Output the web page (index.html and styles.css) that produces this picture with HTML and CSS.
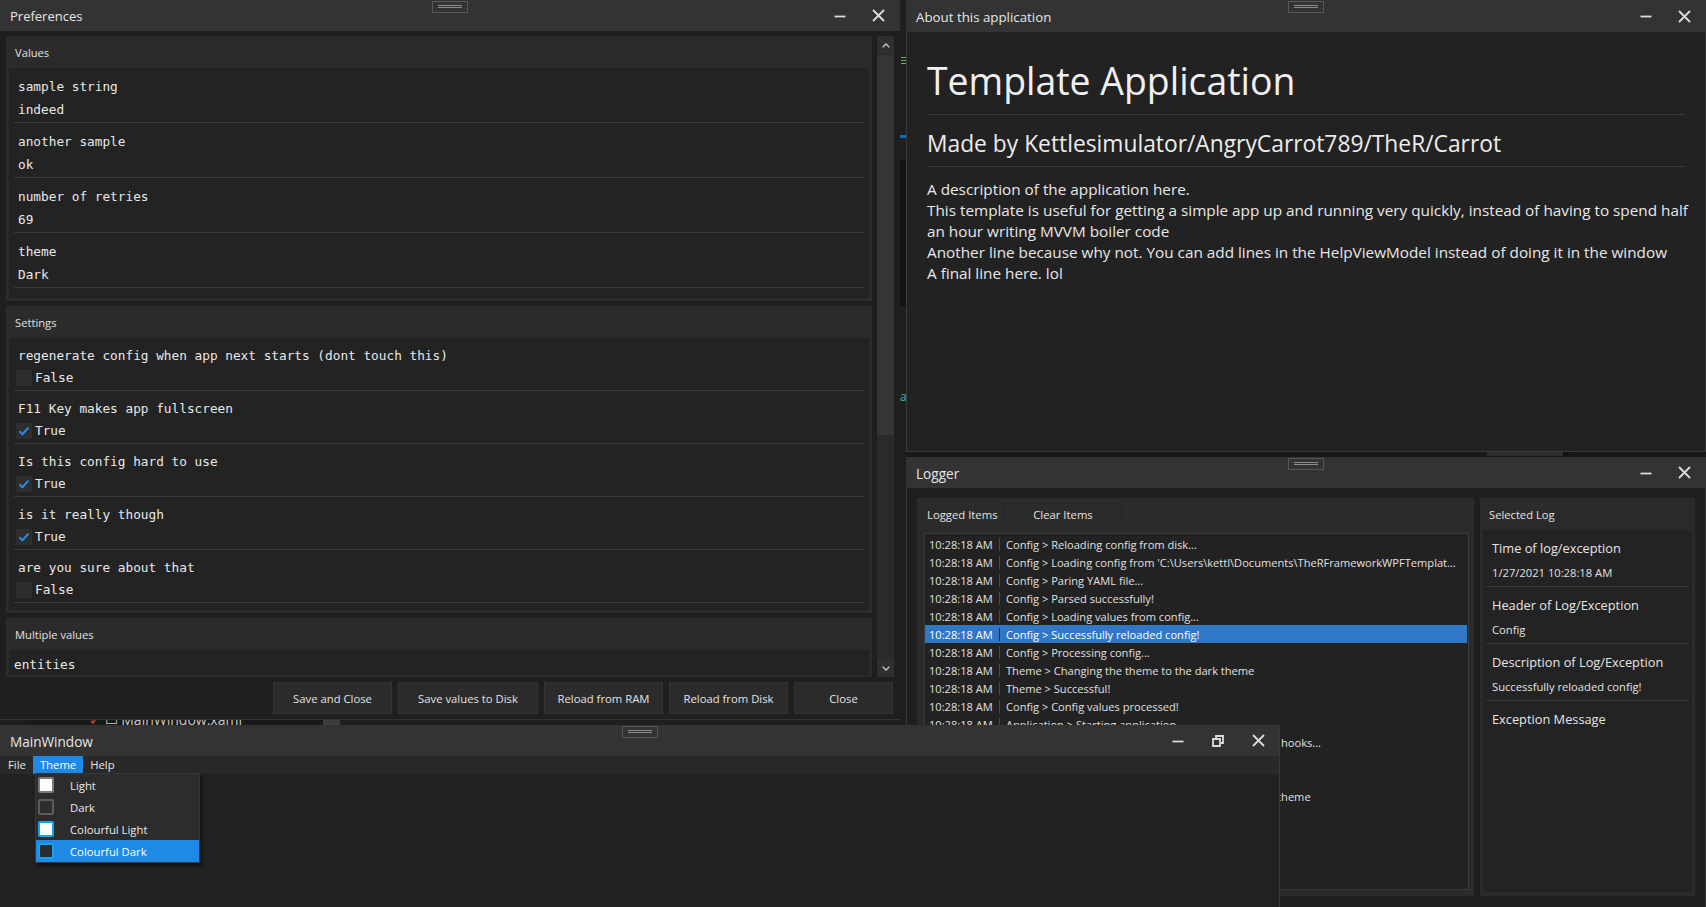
FILE: index.html
```html
<!DOCTYPE html>
<html lang="en">
<head>
<meta charset="utf-8">
<title>Template Application</title>
<link rel="stylesheet" href="styles.css">
</head>
<body>
<div class="desktop">

  <!-- the IDE that shows between the windows -->
  <div class="vs-gap">
    <span class="vs-lines"></span>
    <span class="vs-blue"></span>
    <span class="vs-dark"></span>
    <span class="vs-teal">a</span>
  </div>
  <div class="vs-strip">
    <div class="vs-tree"><span class="vs-file"><span class="vs-red">✓</span> ▭ MainWindow.xaml</span></div>
    <span class="vs-thumb"></span>
  </div>
  <div class="vs-between"><span class="vs-bar"></span></div>

  <!-- Preferences -->
  <section class="window prefs">
    <header class="titlebar">
      <span class="title">Preferences</span>
      <div class="controls">
        <span class="ctl"><svg class="ico" width="12" height="12" viewBox="0 0 12 12"><path d="M0.5 6.5H11.5"/></svg></span>
        <span class="ctl"><svg class="ico" width="13" height="13" viewBox="0 0 13 13"><path d="M1 1L12 12M12 1L1 12"/></svg></span>
      </div>
    </header>
    <span class="grip"></span>
    <div class="prefs-body">
      <div class="scroll-area">
        <div class="groups">
          <div class="group">
            <div class="group-header">Values</div>
            <div class="group-list values">
              <div class="item"><div class="item-label">sample string</div><div class="item-value">indeed</div></div>
              <div class="item"><div class="item-label">another sample</div><div class="item-value">ok</div></div>
              <div class="item"><div class="item-label">number of retries</div><div class="item-value">69</div></div>
              <div class="item"><div class="item-label">theme</div><div class="item-value">Dark</div></div>
            </div>
          </div>
          <div class="group">
            <div class="group-header">Settings</div>
            <div class="group-list settings">
              <div class="item"><div class="item-label">regenerate config when app next starts (dont touch this)</div><div class="check-row"><span class="checkbox"></span><span>False</span></div></div>
              <div class="item"><div class="item-label">F11 Key makes app fullscreen</div><div class="check-row"><span class="checkbox"><svg width="16" height="16" viewBox="0 0 16 16"><path d="M3.5 8.2L6.4 11.2L12.5 4.6"/></svg></span><span>True</span></div></div>
              <div class="item"><div class="item-label">Is this config hard to use</div><div class="check-row"><span class="checkbox"><svg width="16" height="16" viewBox="0 0 16 16"><path d="M3.5 8.2L6.4 11.2L12.5 4.6"/></svg></span><span>True</span></div></div>
              <div class="item"><div class="item-label">is it really though</div><div class="check-row"><span class="checkbox"><svg width="16" height="16" viewBox="0 0 16 16"><path d="M3.5 8.2L6.4 11.2L12.5 4.6"/></svg></span><span>True</span></div></div>
              <div class="item"><div class="item-label">are you sure about that</div><div class="check-row"><span class="checkbox"></span><span>False</span></div></div>
            </div>
          </div>
          <div class="group">
            <div class="group-header">Multiple values</div>
            <div class="group-list flat">
              <div class="item plain"><div class="item-label">entities</div></div>
            </div>
          </div>
        </div>
        <div class="scrollbar">
          <span class="sb-btn"><svg width="8" height="5" viewBox="0 0 8 5"><path d="M0.6 4.4L4 1L7.4 4.4"/></svg></span>
          <span class="sb-thumb"></span>
          <span class="sb-track"></span>
          <span class="sb-btn"><svg width="8" height="5" viewBox="0 0 8 5"><path d="M0.6 0.6L4 4L7.4 0.6"/></svg></span>
        </div>
      </div>
      <div class="btn-row">
        <button class="btn w119">Save and Close</button>
        <button class="btn w140">Save values to Disk</button>
        <button class="btn w119">Reload from RAM</button>
        <button class="btn w119">Reload from Disk</button>
        <button class="btn w99">Close</button>
      </div>
    </div>
  </section>

  <!-- About -->
  <section class="window about">
    <header class="titlebar tall">
      <span class="title mid">About this application</span>
      <div class="controls">
        <span class="ctl"><svg class="ico" width="12" height="12" viewBox="0 0 12 12"><path d="M0.5 6.5H11.5"/></svg></span>
        <span class="ctl"><svg class="ico" width="13" height="13" viewBox="0 0 13 13"><path d="M1 1L12 12M12 1L1 12"/></svg></span>
      </div>
    </header>
    <span class="grip"></span>
    <div class="about-body">
      <h1 class="app-name">Template Application</h1>
      <h2 class="app-author">Made by Kettlesimulator/AngryCarrot789/TheR/Carrot</h2>
      <div class="app-desc">
        <p>A description of the application here.</p>
        <p>This template is useful for getting a simple app up and running very quickly, instead of having to spend half an hour writing MVVM boiler code</p>
        <p>Another line because why not. You can add lines in the HelpViewModel instead of doing it in the window</p>
        <p>A final line here. lol</p>
      </div>
    </div>
  </section>

  <!-- Logger -->
  <section class="window logger">
    <header class="titlebar">
      <span class="title big">Logger</span>
      <div class="controls">
        <span class="ctl"><svg class="ico" width="12" height="12" viewBox="0 0 12 12"><path d="M0.5 6.5H11.5"/></svg></span>
        <span class="ctl"><svg class="ico" width="13" height="13" viewBox="0 0 13 13"><path d="M1 1L12 12M12 1L1 12"/></svg></span>
      </div>
    </header>
    <span class="grip"></span>
    <div class="logger-body">
      <div class="log-panel">
        <div class="log-header">
          <span class="log-caption">Logged Items</span>
          <button class="clear-btn">Clear Items</button>
        </div>
        <div class="log-list">
          <div class="row"><span class="time">10:28:18 AM</span><span class="sep"></span><span class="msg">Config &gt; Reloading config from disk...</span></div>
          <div class="row"><span class="time">10:28:18 AM</span><span class="sep"></span><span class="msg">Config &gt; Loading config from 'C:\Users\kettl\Documents\TheRFrameworkWPFTemplate\TheRFrameworkWPFTemplate\bin\Debug\config.yml'</span></div>
          <div class="row"><span class="time">10:28:18 AM</span><span class="sep"></span><span class="msg">Config &gt; Paring YAML file...</span></div>
          <div class="row"><span class="time">10:28:18 AM</span><span class="sep"></span><span class="msg">Config &gt; Parsed successfully!</span></div>
          <div class="row"><span class="time">10:28:18 AM</span><span class="sep"></span><span class="msg">Config &gt; Loading values from config...</span></div>
          <div class="row selected"><span class="time">10:28:18 AM</span><span class="sep"></span><span class="msg">Config &gt; Successfully reloaded config!</span></div>
          <div class="row"><span class="time">10:28:18 AM</span><span class="sep"></span><span class="msg">Config &gt; Processing config...</span></div>
          <div class="row"><span class="time">10:28:18 AM</span><span class="sep"></span><span class="msg">Theme &gt; Changing the theme to the dark theme</span></div>
          <div class="row"><span class="time">10:28:18 AM</span><span class="sep"></span><span class="msg">Theme &gt; Successful!</span></div>
          <div class="row"><span class="time">10:28:18 AM</span><span class="sep"></span><span class="msg">Config &gt; Config values processed!</span></div>
          <div class="row"><span class="time">10:28:18 AM</span><span class="sep"></span><span class="msg">Application &gt; Starting application...</span></div>
          <div class="row"><span class="time">10:28:18 AM</span><span class="sep"></span><span class="msg">Application &gt; Setting up Global Unhandled exception hooks...</span></div>
          <div class="row"><span class="time">10:28:18 AM</span><span class="sep"></span><span class="msg">Application &gt; Hooks set up!</span></div>
          <div class="row"><span class="time">10:28:18 AM</span><span class="sep"></span><span class="msg">Theme &gt; Loading theme...</span></div>
          <div class="row"><span class="time">10:28:18 AM</span><span class="sep"></span><span class="msg">Theme &gt; Changing the Theme to The Colourful Dark theme</span></div>
          <div class="row"><span class="time">10:28:18 AM</span><span class="sep"></span><span class="msg">Theme &gt; Successful!</span></div>
        </div>
      </div>
      <div class="sel-panel">
        <div class="sel-header">Selected Log</div>
        <div class="sel-list">
          <div class="sel-item"><div class="sel-title">Time of log/exception</div><div class="sel-value">1/27/2021 10:28:18 AM</div></div>
          <div class="sel-item"><div class="sel-title">Header of Log/Exception</div><div class="sel-value">Config</div></div>
          <div class="sel-item"><div class="sel-title">Description of Log/Exception</div><div class="sel-value">Successfully reloaded config!</div></div>
          <div class="sel-item last"><div class="sel-title">Exception Message</div></div>
        </div>
      </div>
    </div>
  </section>

  <!-- MainWindow -->
  <section class="window main">
    <header class="titlebar">
      <span class="title big">MainWindow</span>
      <div class="controls wide">
        <span class="ctl"><svg class="ico" width="12" height="12" viewBox="0 0 12 12"><path d="M0.5 6.5H11.5"/></svg></span>
        <span class="ctl"><svg class="ico" width="12" height="12" viewBox="0 0 12 12"><path d="M4 3V1H11V8H9M1 4H8V11H1Z"/></svg></span>
        <span class="ctl"><svg class="ico" width="13" height="13" viewBox="0 0 13 13"><path d="M1 1L12 12M12 1L1 12"/></svg></span>
      </div>
    </header>
    <span class="grip"></span>
    <nav class="menubar">
      <span class="menu-item">File</span>
      <span class="menu-item open">Theme</span>
      <span class="menu-item">Help</span>
    </nav>
    <div class="main-body"></div>
    <div class="dropdown">
      <div class="dd-item"><span class="swatch light"></span><span>Light</span></div>
      <div class="dd-item"><span class="swatch dark"></span><span>Dark</span></div>
      <div class="dd-item"><span class="swatch clight"></span><span>Colourful Light</span></div>
      <div class="dd-item active"><span class="swatch cdark"></span><span>Colourful Dark</span></div>
    </div>
  </section>

</div>
</body>
</html>
```

FILE: styles.css
```css
* { box-sizing: border-box; margin: 0; padding: 0; }

html, body { width: 1706px; height: 907px; overflow: hidden; }

body {
  background: #1c1c1c;
  font-family: "Open Sans", "Noto Sans", sans-serif;
  font-size: 11.2px;
  color: #e2e2e2;
}

.desktop {
  position: relative;
  width: 1706px;
  height: 907px;
  overflow: hidden;
  background: #1c1c1c;
}

/* ---------- IDE peeking through ---------- */
.vs-gap {
  position: absolute;
  left: 900px; top: 0;
  width: 6px; height: 907px;
  background: #1f1f1f;
  overflow: hidden;
}
.vs-gap span { position: absolute; display: block; }
.vs-lines {
  left: 1px; top: 57px; width: 5px; height: 9px;
  background: repeating-linear-gradient(#68b468 0 1px, transparent 1px 3px);
}
.vs-blue { left: 0; top: 135px; width: 6px; height: 3px; background: #0d6fbf; }
.vs-dark { left: 0; top: 160px; width: 6px; height: 146px; background: #141414; }
.vs-teal { left: 0; top: 389px; font-size: 12px; line-height: 16px; color: #3fb5a5; }

.vs-strip {
  position: absolute;
  left: 0; top: 719px;
  width: 900px; height: 6px;
  background: #1e1e1e;
  overflow: hidden;
}
.vs-tree {
  position: absolute;
  left: 25px; top: 0;
  width: 298px; height: 6px;
  background: #191919;
  overflow: hidden;
}
.vs-file {
  position: absolute;
  left: 64px; top: -9px;
  font-size: 14px; line-height: 19px;
  color: #c8c8c8;
  white-space: nowrap;
}
.vs-red { color: #d24b4b; }
.vs-thumb {
  position: absolute;
  left: 323px; top: 0;
  width: 17px; height: 6px;
  background: #3d3d3d;
}

.vs-between {
  position: absolute;
  left: 906px; top: 452px;
  width: 800px; height: 5px;
  background: #191919;
}
.vs-bar {
  position: absolute;
  left: 581px; top: 0;
  width: 82px; height: 4px;
  background: #2c2c2c;
  border-right: 6px solid #111;
}

/* ---------- windows ---------- */
.window {
  position: absolute;
  display: flex;
  flex-direction: column;
  background: #222;
}
.prefs  { left: 0;     top: 0;     width: 900px;  height: 720px; }
.about  { left: 906px; top: 0;     width: 800px;  height: 452px; }
.logger { left: 906px; top: 457px; width: 800px;  height: 452px; }
.main   { left: 0;     top: 725px; width: 1280px; height: 184px; }

.titlebar {
  flex: none;
  height: 31px;
  display: flex;
  align-items: center;
  padding-left: 10px;
  background: #333;
}
.titlebar.tall { height: 32px; }

.title {
  flex: 1;
  padding-top: 1px;
  font-size: 13px;
  color: #e6e6e6;
  white-space: nowrap;
}
.title.mid { font-size: 13.3px; }
.title.big { font-size: 13.6px; }

.controls {
  display: flex;
  align-self: stretch;
  margin-right: 2px;
}
.controls.wide { margin-right: 1px; }
.ctl {
  width: 39px;
  display: flex;
  align-items: center;
  justify-content: center;
}
.controls.wide .ctl { width: 40px; }

.ico { fill: none; stroke: #dcdcdc; stroke-width: 1.8; }

.grip {
  position: absolute;
  top: 1px; left: 50%;
  width: 36px; height: 12px;
  margin-left: -18px;
  border: 1px solid #565656;
}
.grip::before, .grip::after {
  content: "";
  position: absolute;
  left: 5px; right: 5px;
  height: 1px;
  background: #8c8c8c;
}
.grip::before { top: 3px; }
.grip::after  { top: 5px; }

/* ---------- Preferences ---------- */
.prefs-body {
  flex: 1;
  min-height: 0;
  display: flex;
  flex-direction: column;
  padding: 5px 6px;
  background: #1f1f1f;
  border-bottom: 1px solid #333;
}

.scroll-area {
  flex: 1;
  min-height: 0;
  display: flex;
  gap: 5px;
}

.groups {
  flex: 1;
  display: flex;
  flex-direction: column;
  gap: 5px;
  overflow: hidden;
}

.group {
  flex: none;
  background: #2b2b2b;
  padding: 0 3px 3px;
}

.group-header {
  height: 32px;
  display: flex;
  align-items: center;
  padding-left: 6px;
  font-size: 11.2px;
  color: #e2e2e2;
}

.group-list {
  background: #232323;
  padding: 0 5px 8px;
}
.group-list.values { padding-bottom: 10px; }
.group-list.settings { padding-bottom: 7px; }
.group-list.flat { padding: 0; }

.item {
  padding: 9px 4px 2px;
  border-bottom: 1px solid #3a3a3a;
  font-family: "DejaVu Sans Mono", "Liberation Mono", monospace;
  font-size: 12.75px;
  color: #e8e8e8;
}
.settings .item { padding: 8px 4px 3px; }
.item-label { height: 20px; line-height: 20px; white-space: nowrap; }
.item-value { height: 20px; line-height: 20px; margin-top: 3px; }

.item.plain {
  border-bottom: none;
  padding: 5px 5px 0;
}

.check-row {
  height: 18px;
  margin-top: 3px;
  display: flex;
  align-items: center;
  gap: 3px;
  margin-left: -2px;
  line-height: 18px;
}
.checkbox {
  width: 16px; height: 16px;
  background: #2e2e2e;
  flex: none;
  display: flex;
}
.checkbox path { fill: none; stroke: #2b8be6; stroke-width: 2; }

.scrollbar {
  width: 17px;
  flex: none;
  display: flex;
  flex-direction: column;
  background: #2a2a2a;
}
.sb-btn {
  height: 18px;
  flex: none;
  display: flex;
  align-items: center;
  justify-content: center;
  background: #2f2f2f;
}
.sb-btn path { fill: none; stroke: #cfcfcf; stroke-width: 1.3; }
.sb-thumb { height: 380px; flex: none; margin-top: 1px; background: #353535; }
.sb-track { flex: 1; }

.btn-row {
  flex: none;
  height: 32px;
  margin-top: 5px;
  padding-right: 1px;
  display: flex;
  justify-content: flex-end;
  gap: 6px;
}
.btn {
  height: 32px;
  background: #2b2b2b;
  border: 1px solid #333;
  color: #e2e2e2;
  font-family: inherit;
  font-size: 11.3px;
  display: flex;
  align-items: center;
  justify-content: center;
}
.w119 { width: 119px; }
.w140 { width: 140px; }
.w99  { width: 99px; }

/* ---------- About ---------- */
.about-body {
  flex: 1;
  padding: 0 20px;
  background: #222;
  border: 1px solid #3a3a3a;
  border-top: none;
}
.app-name {
  margin-top: 25px;
  padding-bottom: 10px;
  border-bottom: 1px solid #3a3a3a;
  font-size: 37.4px;
  line-height: 47px;
  font-weight: 400;
  color: #f0f0f0;
  white-space: nowrap;
}
.app-author {
  margin-top: 14px;
  padding-bottom: 8px;
  border-bottom: 1px solid #3a3a3a;
  font-size: 22.8px;
  line-height: 29px;
  font-weight: 400;
  color: #ececec;
  white-space: nowrap;
}
.app-desc {
  margin-top: 12px;
  margin-right: -10px;
  font-size: 15.3px;
  line-height: 21px;
  color: #e8e8e8;
}

/* ---------- Logger ---------- */
.logger-body {
  flex: 1;
  min-height: 0;
  display: flex;
  gap: 6px;
  padding: 10px 10px 12px;
  background: #1f1f1f;
  border: 1px solid #3a3a3a;
  border-top: none;
}

.log-panel {
  width: 557px;
  flex: none;
  display: flex;
  flex-direction: column;
  background: #2b2b2b;
  padding: 0 5px 6px 7px;
}
.log-header {
  height: 32px;
  flex: none;
  display: flex;
  align-items: center;
  padding-left: 3px;
}
.log-caption { width: 77px; font-size: 11.3px; white-space: nowrap; }
.clear-btn {
  width: 118px; height: 23px;
  background: #2b2b2b;
  border: 1px solid #262626;
  color: #e2e2e2;
  font-family: inherit;
  font-size: 11.3px;
}

.log-list {
  flex: 1;
  min-height: 0;
  margin-top: 3px;
  padding: 1px 1px 0 0;
  border: 1px solid #3a3a3a;
  background: #222;
  overflow: hidden;
}
.row {
  height: 18px;
  display: flex;
  align-items: center;
  font-size: 11.1px;
  white-space: nowrap;
  color: #e0e0e0;
}
.row.selected { background: #3077c6; color: #fff; }
.time { width: 74px; flex: none; padding-left: 4px; }
.sep { width: 1px; height: 13px; flex: none; background: #4a4a4a; }
.row.selected .sep { background: #15263a; }
.msg {
  flex: 1;
  min-width: 0;
  padding-left: 6px;
  padding-right: 6px;
  overflow: hidden;
  text-overflow: ellipsis;
}

.sel-panel {
  flex: 1;
  display: flex;
  flex-direction: column;
  background: #2b2b2b;
  padding: 0 3px 4px;
}
.sel-header {
  height: 32px;
  flex: none;
  display: flex;
  align-items: center;
  padding-left: 6px;
  font-size: 11.2px;
}
.sel-list {
  flex: 1;
  background: #232323;
  padding: 0 3px;
}
.sel-item {
  padding: 8px 6px 3px;
  border-bottom: 1px solid #3a3a3a;
}
.sel-item.last { border-bottom: none; }
.sel-title { height: 20px; line-height: 20px; font-size: 12.8px; color: #e6e6e6; white-space: nowrap; }
.sel-value { height: 20px; line-height: 20px; margin-top: 5px; font-size: 11.2px; white-space: nowrap; }

/* ---------- MainWindow ---------- */
.main { border-right: 1px solid #3a3a3a; }

.menubar {
  flex: none;
  height: 18px;
  display: flex;
  padding-left: 1px;
  background: #292929;
}
.menu-item {
  padding: 0 7px;
  line-height: 18px;
  font-size: 11.3px;
  color: #e6e6e6;
}
.menu-item.open { background: #1f8ae6; color: #fff; }

.main-body { flex: 1; background: #222; }

.dropdown {
  position: absolute;
  left: 35px; top: 48px;
  width: 165px; height: 90px;
  background: #2c2c2c;
  border: 1px solid #383838;
  box-shadow: 2px 3px 4px rgba(0, 0, 0, 0.55);
}
.dd-item {
  height: 22px;
  display: flex;
  align-items: center;
  padding-left: 2px;
  font-size: 11.3px;
  color: #eaeaea;
}
.dd-item.active { background: #1f8ae6; color: #fff; }
.dd-item span:last-child { margin-left: 16px; }

.swatch {
  width: 16px; height: 16px;
  flex: none;
  border-radius: 2px;
  border: 2px solid #6a6a6a;
}
.swatch.light  { background: #fbfbfb; border-color: #7a7a7a; }
.swatch.dark   { background: #2e2e2e; border-color: #5c5c5c; }
.swatch.clight { background: #fbfbfb; border-color: #12a4ea; }
.swatch.cdark  { background: #2b2b2b; border-color: #12a4ea; }
```
